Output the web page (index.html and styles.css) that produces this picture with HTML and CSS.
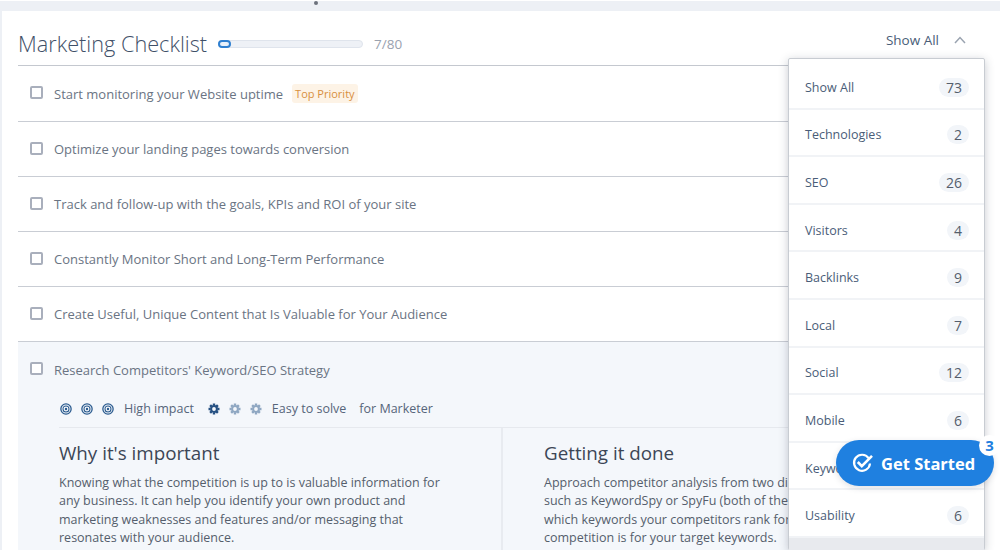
FILE: index.html
```html
<!DOCTYPE html>
<html lang="en">
<head>
<meta charset="utf-8">
<title>Marketing Checklist</title>
<link rel="stylesheet" href="styles.css">
</head>
<body>
<svg width="0" height="0" class="defs" aria-hidden="true">
  <defs>
    <symbol id="target" viewBox="0 0 14 14">
      <circle cx="7" cy="7" r="6" fill="none" stroke="currentColor" stroke-width="1.5"/>
      <circle cx="7" cy="7" r="3.5" fill="none" stroke="currentColor" stroke-width="1.2"/>
      <circle cx="7" cy="7" r="1.4" fill="currentColor"/>
    </symbol>
    <symbol id="gear" viewBox="0 0 14 14">
      <circle cx="7" cy="7" r="3.4" fill="none" stroke="currentColor" stroke-width="2.4"/>
      <path fill="currentColor" d="M5.6 0.6h2.8v2.4h-2.8zM5.6 11h2.8v2.4h-2.8zM0.6 5.6h2.4v2.8h-2.4zM11 5.6h2.4v2.8h-2.4zM1.5 3.5l2-2 1.7 1.7-2 2zM8.8 3.2l1.7-1.7 2 2-1.7 1.7zM1.5 10.5l1.7-1.7 2 2-1.7 1.7zM8.8 10.8l2-2 1.7 1.7-2 2z"/>
    </symbol>
  </defs>
</svg>
<div class="topbar"><span class="dot"></span></div>
<main class="panel">
  <header class="head">
    <h1 class="title">Marketing Checklist</h1>
    <div class="progress"><span class="progress-fill"></span></div>
    <span class="count">7/80</span>
    <div class="filter">
      <span>Show All</span>
      <svg class="chev" width="12" height="8" viewBox="0 0 12 8"><path d="M1 7l5-5.5L11 7" fill="none" stroke="currentColor" stroke-width="1.5"/></svg>
    </div>
  </header>
  <div class="row row-first"><span class="check"></span><span class="label">Start monitoring your Website uptime</span><span class="tag">Top Priority</span></div>
  <div class="row"><span class="check"></span><span class="label">Optimize your landing pages towards conversion</span></div>
  <div class="row"><span class="check"></span><span class="label">Track and follow-up with the goals, KPIs and ROI of your site</span></div>
  <div class="row"><span class="check"></span><span class="label">Constantly Monitor Short and Long-Term Performance</span></div>
  <div class="row"><span class="check"></span><span class="label">Create Useful, Unique Content that Is Valuable for Your Audience</span></div>
  <section class="open">
    <div class="row row-open"><span class="check"></span><span class="label">Research Competitors' Keyword/SEO Strategy</span></div>
    <div class="detail">
      <div class="meta">
        <span class="icons targets">
          <svg class="ico"><use href="#target"/></svg>
          <svg class="ico"><use href="#target"/></svg>
          <svg class="ico"><use href="#target"/></svg>
        </span>
        <span class="meta-text">High impact</span>
        <span class="icons gears">
          <svg class="ico on"><use href="#gear"/></svg>
          <svg class="ico"><use href="#gear"/></svg>
          <svg class="ico"><use href="#gear"/></svg>
        </span>
        <span class="meta-text">Easy to solve</span>
        <span class="meta-text for">for Marketer</span>
      </div>
      <div class="cols">
        <article class="col col-left">
          <h2>Why it's important</h2>
          <p>Knowing what the competition is up to is valuable information for any business. It can help you identify your own product and marketing weaknesses and features and/or messaging that resonates with your audience.</p>
        </article>
        <article class="col col-right">
          <h2>Getting it done</h2>
          <p>Approach competitor analysis from two directions. Use tools<br>such as KeywordSpy or SpyFu (both of these are paid) to see<br>which keywords your competitors rank for and how strong the<br>competition is for your target keywords.</p>
        </article>
      </div>
    </div>
  </section>
</main>
<nav class="menu">
  <div class="item"><span>Show All</span><b class="num">73</b></div>
  <div class="item"><span>Technologies</span><b class="num">2</b></div>
  <div class="item"><span>SEO</span><b class="num">26</b></div>
  <div class="item"><span>Visitors</span><b class="num">4</b></div>
  <div class="item"><span>Backlinks</span><b class="num">9</b></div>
  <div class="item"><span>Local</span><b class="num">7</b></div>
  <div class="item"><span>Social</span><b class="num">12</b></div>
  <div class="item"><span>Mobile</span><b class="num">6</b></div>
  <div class="item"><span>Keywords</span><b class="num">3</b></div>
  <div class="item"><span>Usability</span><b class="num">6</b></div>
  <div class="menu-foot"></div>
</nav>
<button class="cta" type="button">
  <svg class="cta-ico" width="22" height="20" viewBox="0 0 22 20"><path d="M16.6 5.2A8 8 0 1 0 18 10.500" fill="none" stroke="#fff" stroke-width="2.2"/><path d="M5.800 9l4 4.200L20 2.800" fill="none" stroke="#fff" stroke-width="2.600"/></svg>
  <span>Get Started</span>
  <span class="badge">3</span>
</button>
</body>
</html>
```

FILE: styles.css
```css
* { box-sizing: border-box; }
html, body { height: 550px; margin: 0; overflow: hidden; }
body {
  background: #fff;
  font-family: "Open Sans", sans-serif;
  color: #5f6b7c;
  position: relative;
}
.defs { position: absolute; }
.topbar {
  height: 10px;
  margin-top: 1px;
  background: #edf0f5;
  position: relative;
}
.dot {
  position: absolute;
  left: 314px;
  top: 0;
  width: 4px;
  height: 4px;
  border-radius: 50%;
  background: #6c727c;
}
.panel {
  margin-left: 2px;
  margin-top: -1px;
  padding: 0 15px 0 16px;
  height: 540px;
  background: #fff;
  box-shadow: -2px 0 0 #edf0f5;
}
.head {
  display: flex;
  align-items: center;
  height: 56px;
  border-bottom: 1px solid #c4c8cf;
  padding-top: 12px;
}
.title {
  margin: 0;
  font-size: 21.7px;
  font-weight: 300;
  color: #3f5068;
  line-height: 30px;
}
.progress {
  width: 145px;
  height: 8px;
  margin-left: 11px;
  border: 1px solid #dfe4ec;
  border-radius: 4px;
  background: #eef1f6;
  position: relative;
}
.progress-fill {
  position: absolute;
  left: -1px;
  top: -1px;
  width: 13px;
  height: 8px;
  border: 2px solid #2f7fd0;
  border-radius: 4px;
  background: #e8f0fa;
}
.count {
  margin-left: 11px;
  font-size: 13.5px;
  color: #9aa2af;
}
.filter {
  margin-left: auto;
  margin-right: 19px;
  display: flex;
  align-items: center;
  gap: 15px;
  font-size: 13.5px;
  color: #4a5d78;
  transform: translateY(-4px);
}
.chev { color: #9aa3b0; }
.row {
  display: flex;
  align-items: center;
  height: 55px;
  padding-left: 12px;
  border-bottom: 1px solid #c9cdd4;
}
.row-first { height: 56px; }
.row-open { border-bottom: 0; }
.check {
  width: 13px;
  height: 13px;
  border: 2px solid #a9afbc;
  border-radius: 2px;
  background: #fff;
  margin-right: 11px;
  transform: translateY(-1px);
}
.label { font-size: 13px; color: #6a7483; }
.tag {
  margin-left: 9px;
  padding: 0 3px;
  height: 19px;
  line-height: 19px;
  font-size: 11px;
  border-radius: 3px;
  color: #d88f3e;
  background: #fdf3e6;
}
.open { background: #f4f7fb; height: 220px; }
.detail { padding-left: 41px; margin-top: -7px; }
.meta {
  display: flex;
  align-items: center;
  height: 38px;
  border-bottom: 1px solid #e6e9ee;
  font-size: 12.5px;
  color: #56657a;
}
.icons { display: flex; gap: 9px; }
.ico { width: 12px; height: 12px; display: block; }
.targets { color: #2a5b8f; margin-right: 10px; margin-left: 1px; }
.gears { color: #8fa7c2; margin-left: 14px; margin-right: 10px; }
.gears .on { color: #255082; }
.for { margin-left: 13px; }
.cols { display: flex; height: 130px; }
.col h2 {
  margin: 12px 0 8px;
  font-size: 18.8px;
  font-weight: 400;
  line-height: 26px;
  color: #3c4656;
}
.col p {
  margin: 0;
  font-size: 12.5px;
  line-height: 18.3px;
  color: #555e6c;
}
.col-left { width: 444px; padding-right: 50px; border-right: 2px solid #e8ebf0; }
.col-right { padding-left: 41px; white-space: nowrap; }
.menu {
  position: absolute;
  left: 788px;
  top: 58px;
  width: 197px;
  height: 492px;
  padding-top: 3px;
  background: #fff;
  border: 1px solid #c8ccd2;
  border-radius: 2px;
  box-shadow: 0 2px 10px rgba(40, 50, 70, .25);
}
.item {
  display: flex;
  align-items: center;
  justify-content: space-between;
  height: 47.6px;
  padding: 5px 15px 0 16px;
  border-bottom: 2px solid #f1f3f6;
  font-size: 12.5px;
  color: #4a5d78;
}
.num {
  min-width: 22px;
  height: 19px;
  line-height: 19px;
  padding: 0 7px;
  border-radius: 10px;
  background: #f2f5f9;
  font-size: 14px;
  font-weight: 400;
  text-align: center;
  color: #555e6c;
}
.menu-foot { height: 14px; background: #e8eaee; }
.cta {
  position: absolute;
  left: 836px;
  top: 440px;
  width: 158px;
  height: 46px;
  border: 0;
  border-radius: 23px;
  background: #1f80e0;
  color: #fff;
  font-family: "Open Sans", sans-serif;
  font-size: 16.5px;
  font-weight: 700;
  display: flex;
  align-items: center;
  gap: 7px;
  padding: 0 0 0 16px;
  box-shadow: 0 2px 6px rgba(40, 50, 70, .15);
}
.cta-ico { flex: none; }
.badge {
  position: absolute;
  right: -6px;
  top: -5px;
  width: 21px;
  height: 21px;
  border-radius: 50%;
  background: #fff;
  color: #1f80e0;
  font-size: 15px;
  line-height: 21px;
  text-align: center;
}
```
